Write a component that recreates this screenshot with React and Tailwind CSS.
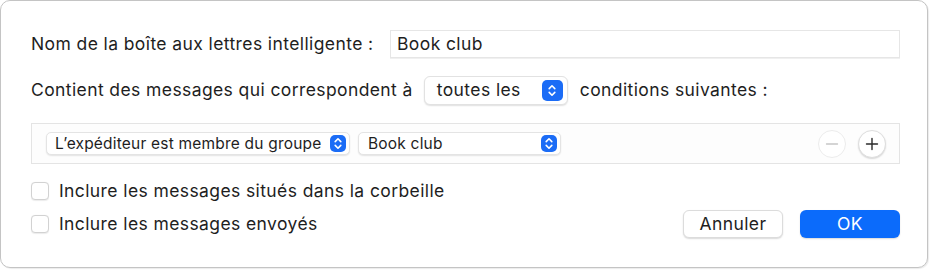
import React from "react";

const Stepper = ({ className = "" }) => (
  <span className={`flex items-center justify-center rounded-[5px] bg-[#1b6cf6] ${className}`}>
    <svg width="8" height="13" viewBox="0 0 8 13" fill="none">
      <path d="M1.2 4.6 L4 1.8 L6.8 4.6" stroke="white" strokeWidth="1.6" strokeLinecap="round" strokeLinejoin="round" />
      <path d="M1.2 8.4 L4 11.2 L6.8 8.4" stroke="white" strokeWidth="1.6" strokeLinecap="round" strokeLinejoin="round" />
    </svg>
  </span>
);

const Checkbox = () => (
  <span className="w-[18px] h-[18px] rounded-[4px] border border-[#d2d2d2] bg-white shadow-[0_0.5px_1px_rgba(0,0,0,0.08)] shrink-0" />
);

const App = () => {
  return (
    <div className="w-[931px] h-[271px] bg-white font-['Inter',sans-serif] text-[#1e1e1e]">
      <div className="w-[928px] h-[268px] rounded-[10px] border border-[#c4c4c4] bg-white pl-[30px] pr-[27px] pt-[29px] shadow-[1px_1px_1px_rgba(0,0,0,0.08)]">
        {/* Name row */}
        <div className="flex items-center h-[28px]">
          <span className="text-[17.5px] tracking-[0.4px]">Nom de la boîte aux lettres intelligente :</span>
          <div className="ml-auto w-[510px] h-[28px] flex items-center px-[6px] border border-[#e6e6e6] shadow-[0_1px_0_rgba(0,0,0,0.06)] text-[17.5px] tracking-[0.4px]">
            Book club
          </div>
        </div>

        {/* Match row */}
        <div className="flex items-center h-[29px] mt-[18px]">
          <span className="text-[17.5px] tracking-[0.4px]">Contient des messages qui correspondent à</span>
          <div className="ml-[11px] w-[144px] h-[29px] flex items-center justify-between pl-[12px] pr-[4px] rounded-[6px] bg-white border border-[#e2e2e2] shadow-[0_1px_1.5px_rgba(0,0,0,0.12)]">
            <span className="text-[17.5px] tracking-[0.4px]">toutes les</span>
            <Stepper className="w-[21px] h-[21px]" />
          </div>
          <span className="ml-[12px] text-[17.5px] tracking-[0.4px]">conditions suivantes :</span>
        </div>

        {/* Condition box */}
        <div className="mt-[18px] h-[41px] border border-[#e4e4e4] bg-[#fdfdfd] flex items-center pl-[14px] pr-[13px]">
          <div className="w-[304px] h-[23px] flex items-center justify-between pl-[8px] pr-[3px] rounded-[5px] bg-white border border-[#e4e4e4] shadow-[0_1px_1.5px_rgba(0,0,0,0.1)]">
            <span className="text-[15.5px] tracking-[0.2px]">L’expéditeur est membre du groupe</span>
            <Stepper className="w-[16px] h-[17px]" />
          </div>
          <div className="ml-[8px] w-[203px] h-[23px] flex items-center justify-between pl-[9px] pr-[3px] rounded-[5px] bg-white border border-[#e4e4e4] shadow-[0_1px_1.5px_rgba(0,0,0,0.1)]">
            <span className="text-[15.5px] tracking-[0.2px]">Book club</span>
            <Stepper className="w-[16px] h-[17px]" />
          </div>
          <div className="ml-auto flex items-center gap-[12px]">
            <span className="w-[28px] h-[28px] rounded-full bg-white border border-[#ececec] flex items-center justify-center">
              <svg width="14" height="14" viewBox="0 0 14 14">
                <path d="M1.5 7 H12.5" stroke="#c6c6c6" strokeWidth="1.4" strokeLinecap="round" />
              </svg>
            </span>
            <span className="w-[28px] h-[28px] rounded-full bg-white border border-[#dedede] shadow-[0_1px_1.5px_rgba(0,0,0,0.15)] flex items-center justify-center">
              <svg width="14" height="14" viewBox="0 0 14 14">
                <path d="M1.5 7 H12.5 M7 1.5 V12.5" stroke="#2a2a2a" strokeWidth="1.4" strokeLinecap="round" />
              </svg>
            </span>
          </div>
        </div>

        {/* Options + buttons */}
        <div className="mt-[17px] flex items-center h-[20px]">
          <Checkbox />
          <span className="ml-[10px] text-[17.5px] tracking-[0.4px]">Inclure les messages situés dans la corbeille</span>
        </div>
        <div className="mt-[13px] flex items-center h-[20px]">
          <Checkbox />
          <span className="ml-[10px] text-[17.5px] tracking-[0.4px]">Inclure les messages envoyés</span>
          <div className="ml-auto flex items-center gap-[17px]">
            <button className="w-[100px] h-[28px] rounded-[6px] bg-white border border-[#dcdcdc] shadow-[0_1px_1.5px_rgba(0,0,0,0.15)] text-[17.5px] tracking-[0.4px] text-[#1e1e1e]">
              Annuler
            </button>
            <button className="w-[100px] h-[28px] rounded-[6px] bg-[#0b6bfb] text-white text-[17.5px] tracking-[0.4px] shadow-[0_1px_1.5px_rgba(0,0,0,0.15)]">
              OK
            </button>
          </div>
        </div>
      </div>
    </div>
  );
};

export default App;
